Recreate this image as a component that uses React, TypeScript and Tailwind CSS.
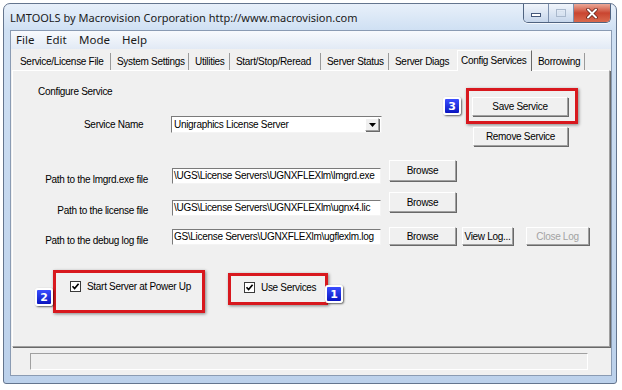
import React from "react";

const raised =
  "bg-[#f0f0f0] border border-t-white border-l-white border-r-[#a0a0a0] border-b-[#a0a0a0] shadow-[1px_1px_0_#696969] flex items-center justify-center whitespace-nowrap";
const sunken =
  "bg-white border border-t-[#7a7a7a] border-l-[#7a7a7a] border-r-[#f4f4f4] border-b-[#f4f4f4] overflow-hidden whitespace-nowrap flex items-center";

function Badge({ n }: { n: string }) {
  return (
    <div className="relative z-10 w-[18px] h-[18px] shrink-0 rounded-[3px] border-2 border-white bg-linear-to-b from-[#3b4dff] to-[#0a12c0] shadow-[1px_1px_2px_rgba(0,0,0,0.6)] flex items-center justify-center text-white text-[11px] font-bold font-['DejaVu_Sans',sans-serif] leading-none">
      {n}
    </div>
  );
}

function Check() {
  return (
    <div className="w-[11px] h-[11px] shrink-0 border border-[#3a3a3a] bg-white flex items-center justify-center">
      <svg width="9" height="9" viewBox="0 0 9 9">
        <path d="M1.5 4.2 L3.6 6.5 L7.6 1.8" stroke="#000" strokeWidth="1.7" fill="none" />
      </svg>
    </div>
  );
}

const tabs: { t: string; cls: string; sel?: boolean; noSep?: boolean }[] = [
  { t: "Service/License File", cls: "w-[97px]" },
  { t: "System Settings", cls: "w-[78px]" },
  { t: "Utilities", cls: "w-[41px]" },
  { t: "Start/Stop/Reread", cls: "w-[91px]" },
  { t: "Server Status", cls: "w-[68px]" },
  { t: "Server Diags", cls: "w-[68px]", noSep: true },
  { t: "Config Services", cls: "w-[75px]", sel: true },
  { t: "Borrowing", cls: "w-[53px]" },
];

export default function App() {
  return (
    <div className="w-[622px] h-[390px] bg-white overflow-hidden pt-[3px] pl-[3px] font-['Liberation_Sans',Arial,sans-serif] text-[10px] tracking-[-0.3px] text-black">
      <div className="w-[614px] h-[381px] rounded-t-[7px] rounded-b-[3px] border border-[#64758e] bg-[linear-gradient(to_bottom,#e8f0fa_0px,#cfe0f3_26px,#c5d8ef_200px,#bcd1eb_100%)] flex flex-col overflow-hidden">
        {/* Title bar */}
        <div className="h-[26px] shrink-0 flex items-start justify-between">
          <div className="pl-[6px] pt-[6px] text-[11px] tracking-normal font-['Noto_Sans',sans-serif] text-[#1a1a1a] leading-[16px]">
            LMTOOLS by Macrovision Corporation http://www.macrovision.com
          </div>
          <div className="flex h-[19px] mr-[5px] border border-t-0 border-[#4f6380] rounded-b-[5px] overflow-hidden shadow-[0_1px_0_rgba(255,255,255,0.7)]">
            <div className="w-[25px] bg-linear-to-b from-[#f1f5fb] to-[#c6d6eb] flex items-start justify-center border-r border-[#7d90ad]">
              <div className="w-[10px] h-[4px] bg-white border border-[#44577a] mt-[9px]" />
            </div>
            <div className="w-[25px] bg-linear-to-b from-[#f1f5fb] to-[#c6d6eb] flex items-start justify-center border-r border-[#7d90ad]">
              <div className="w-[10px] h-[8px] border border-[#a9b8cc] mt-[5px] flex items-center justify-center">
                <div className="w-[6px] h-[4px] border border-[#d8e2ef]" />
              </div>
            </div>
            <div className="w-[36px] bg-linear-to-b from-[#eaa898] via-[#c94530] to-[#d9694d] flex items-center justify-center">
              <svg width="12" height="11" viewBox="0 0 12 11">
                <path d="M2 1.5 L10 9.5 M10 1.5 L2 9.5" stroke="#5a1a10" strokeWidth="3.4" strokeLinecap="round" />
                <path d="M2 1.5 L10 9.5 M10 1.5 L2 9.5" stroke="#fff" strokeWidth="2" strokeLinecap="round" />
              </svg>
            </div>
          </div>
        </div>

        {/* Client area */}
        <div className="ml-[6px] mr-[4px] h-[346px] shrink-0 border border-[#8a9bb3] bg-[#f0f0f0] flex flex-col">
          {/* Menu bar */}
          <div className="h-[18px] shrink-0 bg-linear-to-b from-[#f8fafd] to-[#e2eaf5] flex items-center pl-[5px] text-[11.5px] tracking-normal font-['Noto_Sans',sans-serif] text-[#1a1a1a]">
            <span className="w-[30px]">File</span>
            <span className="w-[33px]">Edit</span>
            <span className="w-[43px]">Mode</span>
            <span>Help</span>
          </div>

          {/* Tabs */}
          <div className="h-[21px] shrink-0 flex items-end pl-[3px]">
            {tabs.map((tb) =>
              tb.sel ? (
                <div
                  key={tb.t}
                  className={`${tb.cls} h-[21px] -mb-[1px] relative z-10 bg-[#f0f0f0] border-l border-t border-white border-r border-r-[#696969] pl-[3px] pb-[2px] flex items-center whitespace-nowrap overflow-hidden`}
                >
                  {tb.t}
                </div>
              ) : (
                <div
                  key={tb.t}
                  className={`${tb.cls} h-[17px] pl-[6px] flex items-center whitespace-nowrap overflow-hidden ${
                    tb.noSep ? "" : "border-r border-[#9a9a9a]"
                  }`}
                >
                  {tb.t}
                </div>
              )
            )}
          </div>

          {/* Panel */}
          <div className="ml-[1px] w-[598px] h-[277px] shrink-0 border border-t-white border-l-white border-r-[#a0a0a0] border-b-[#a0a0a0] shadow-[1px_1px_0_#696969] flex flex-col">
            {/* Header section */}
            <div className="h-[77px] shrink-0 flex">
              <div className="w-[430px] flex flex-col">
                <div className="ml-[25px] mt-[15px] leading-[12px]">Configure Service</div>
                <div className="mt-[18px] flex items-center h-[17px]">
                  <div className="ml-[71px] w-[87px] leading-[12px]">Service Name</div>
                  <div className={`${sunken} w-[211px] h-[17px] justify-between`}>
                    <span className="pl-[2px] leading-[12px]">Unigraphics License Server</span>
                    <div className={`${raised} w-[14px] h-[13px] mr-[2px]`}>
                      <svg width="7" height="4" viewBox="0 0 7 4">
                        <path d="M0 0 H7 L3.5 4 Z" fill="#000" />
                      </svg>
                    </div>
                  </div>
                </div>
              </div>
              <div className="flex flex-col">
                <div className="mt-[17px] flex items-center">
                  <Badge n="3" />
                  <div className="ml-[5px] w-[112px] h-[36px] border-[3px] border-[#d8181e] shadow-[1px_1px_3px_rgba(0,0,0,0.45)] flex items-center pl-[3px]">
                    <div className={`${raised} w-[96px] h-[19px]`}>Save Service</div>
                  </div>
                </div>
                <div className={`${raised} mt-[3px] ml-[30px] w-[95px] h-[19px]`}>Remove Service</div>
              </div>
            </div>

            {/* Path row 1 */}
            <div className="mt-[10px] h-[32px] shrink-0 flex items-start">
              <div className="w-[135px] text-right mt-[16px] leading-[12px]">Path to the lmgrd.exe file</div>
              <div className={`${sunken} ml-[24px] mt-[10px] w-[209px] h-[16px]`}>
                <span className="pl-[1px] leading-[12px]">\UGS\License Servers\UGNXFLEXlm\lmgrd.exe</span>
              </div>
              <div className={`${raised} ml-[8px] mt-[2px] w-[67px] h-[21px]`}>Browse</div>
            </div>

            {/* Path row 2 */}
            <div className="h-[35px] shrink-0 flex items-start">
              <div className="w-[135px] text-right mt-[15px] leading-[12px]">Path to the license file</div>
              <div className={`${sunken} ml-[24px] mt-[10px] w-[209px] h-[16px]`}>
                <span className="pl-[1px] leading-[12px]">\UGS\License Servers\UGNXFLEXlm\ugnx4.lic</span>
              </div>
              <div className={`${raised} ml-[8px] mt-[2px] w-[67px] h-[20px]`}>Browse</div>
            </div>

            {/* Path row 3 */}
            <div className="h-[22px] shrink-0 flex items-start">
              <div className="w-[135px] text-right mt-[10px] leading-[12px]">Path to the debug log file</div>
              <div className={`${sunken} ml-[24px] mt-[4px] w-[209px] h-[16px]`}>
                <span className="pl-[1px] leading-[12px]">GS\License Servers\UGNXFLEXlm\ugflexlm.log</span>
              </div>
              <div className={`${raised} ml-[8px] mt-[2px] w-[67px] h-[18px]`}>Browse</div>
              <div className={`${raised} ml-[6px] mt-[2px] w-[51px] h-[18px]`}>View Log...</div>
              <div className={`${raised} ml-[13px] mt-[2px] w-[63px] h-[18px] text-[#a3a3a3]`}>Close Log</div>
            </div>

            {/* Checkboxes */}
            <div className="mt-[23px] flex items-start">
              <div className="ml-[22px] mt-[18px]">
                <Badge n="2" />
              </div>
              <div className="w-[152px] h-[43px] border-[3px] border-[#d8181e] shadow-[1px_1px_3px_rgba(0,0,0,0.45)] flex items-start pl-[14px] pt-[8px]">
                <Check />
                <span className="ml-[6px] leading-[12px]">Start Server at Power Up</span>
              </div>
              <div className="ml-[23px] mt-[3px] w-[100px] h-[32px] border-[3px] border-[#d8181e] shadow-[1px_1px_3px_rgba(0,0,0,0.45)] flex items-start pl-[13px] pt-[6px]">
                <Check />
                <span className="ml-[6px] leading-[12px]">Use Services</span>
              </div>
              <div className="-ml-[3px] mt-[15px]">
                <Badge n="1" />
              </div>
            </div>
          </div>

          {/* Status bar */}
          <div className="ml-[19px] mt-[6px] w-[558px] h-[17px] border border-t-[#a0a0a0] border-l-[#a0a0a0] border-r-white border-b-white" />
        </div>
      </div>
    </div>
  );
}
